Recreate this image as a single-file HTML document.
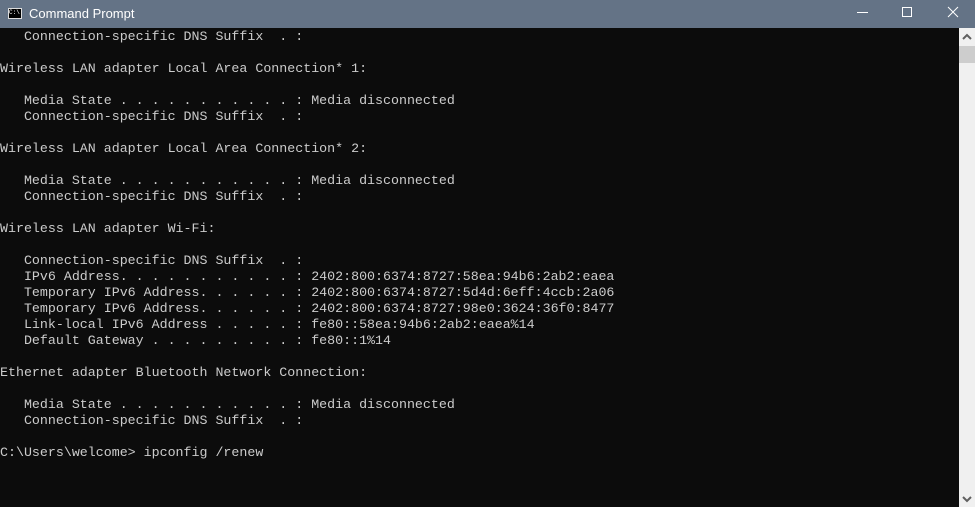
<!DOCTYPE html><html><head><style>
body{margin:0;width:975px;height:507px;overflow:hidden;background:#0c0c0c;position:relative;font-family:"Liberation Sans",sans-serif}
#t{position:absolute;left:0;top:0;width:975px;height:28px;background:#647386;color:#fff;font-size:13px}
#t .ic{position:absolute;left:8px;top:8px;width:14px;height:11px;background:#000;border:1px solid #ddd;box-sizing:border-box;color:#fff;font-size:6px;line-height:8px;font-family:"Liberation Mono",monospace}
#t .tt{position:absolute;left:29px;top:6px}
pre{position:absolute;left:0;top:29px;margin:0;color:#cccccc;font-family:"Liberation Mono",monospace;font-size:13.3px;line-height:16px}
#sb{position:absolute;left:959px;top:28px;width:16px;height:479px;background:#f0f0f0}
#th{position:absolute;left:959px;top:46px;width:16px;height:17px;background:#cdcdcd}
</style></head><body>
<div id="t"><div class="ic">C:\</div><div class="tt">Command Prompt</div>
<svg style="position:absolute;left:840px;top:0" width="135" height="28"><line x1="17" y1="12.5" x2="28" y2="12.5" stroke="#fff"/><rect x="62.5" y="7.5" width="9" height="9" fill="none" stroke="#fff"/><path d="M108 7L118 17M118 7L108 17" stroke="#fff"/></svg></div>
<pre>   Connection-specific DNS Suffix  . :

Wireless LAN adapter Local Area Connection* 1:

   Media State . . . . . . . . . . . : Media disconnected
   Connection-specific DNS Suffix  . :

Wireless LAN adapter Local Area Connection* 2:

   Media State . . . . . . . . . . . : Media disconnected
   Connection-specific DNS Suffix  . :

Wireless LAN adapter Wi-Fi:

   Connection-specific DNS Suffix  . :
   IPv6 Address. . . . . . . . . . . : 2402:800:6374:8727:58ea:94b6:2ab2:eaea
   Temporary IPv6 Address. . . . . . : 2402:800:6374:8727:5d4d:6eff:4ccb:2a06
   Temporary IPv6 Address. . . . . . : 2402:800:6374:8727:98e0:3624:36f0:8477
   Link-local IPv6 Address . . . . . : fe80::58ea:94b6:2ab2:eaea%14
   Default Gateway . . . . . . . . . : fe80::1%14

Ethernet adapter Bluetooth Network Connection:

   Media State . . . . . . . . . . . : Media disconnected
   Connection-specific DNS Suffix  . :

C:\Users\welcome> ipconfig /renew</pre>
<div id="sb"></div><div id="th"></div>
<svg style="position:absolute;left:959px;top:32px" width="16" height="10"><path d="M4 7L8 3L12 7" stroke="#606060" stroke-width="2" fill="none"/></svg>
<svg style="position:absolute;left:959px;top:494px" width="16" height="10"><path d="M4 3L8 7L12 3" stroke="#606060" stroke-width="2" fill="none"/></svg>
</body></html>
